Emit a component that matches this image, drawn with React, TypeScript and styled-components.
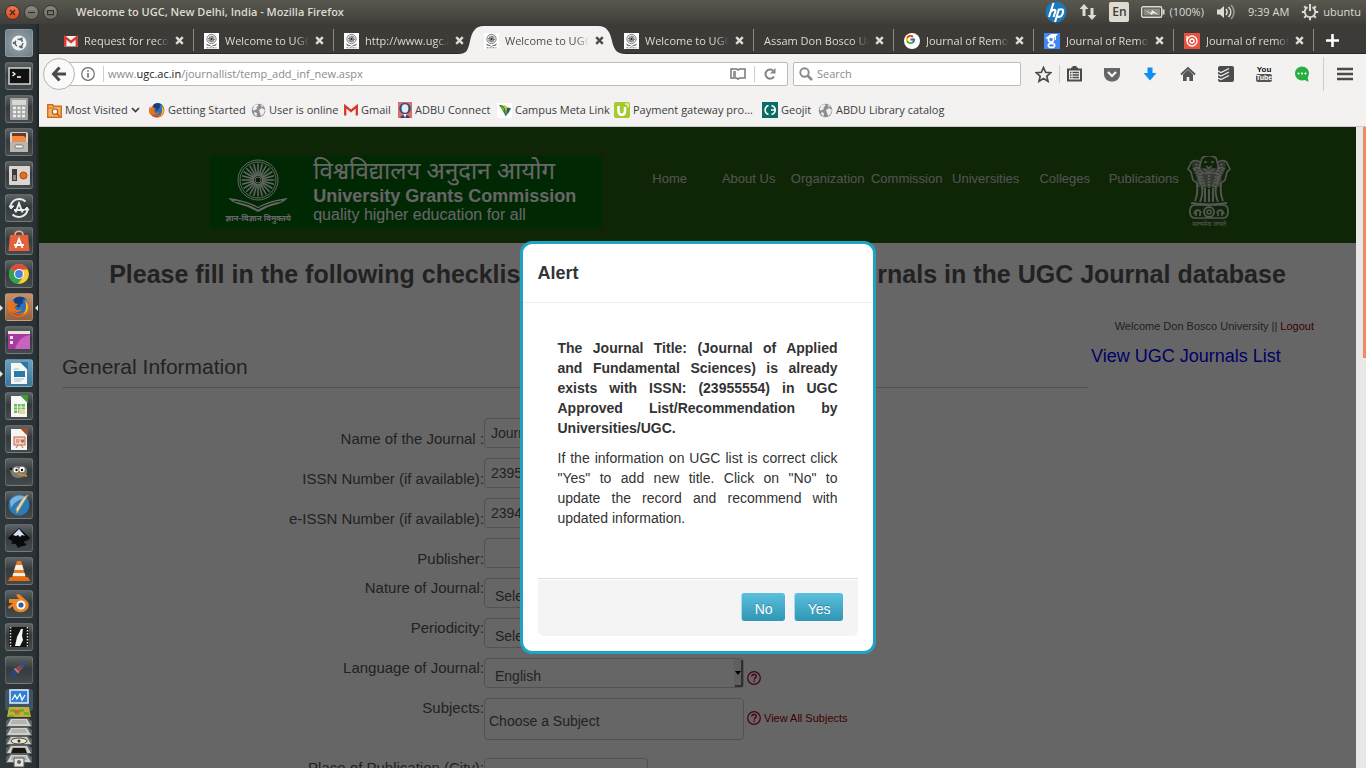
import React from "react";
import styled, { createGlobalStyle, css } from "styled-components";
import { FcGoogle } from "react-icons/fc";

const uiFont = `"Open Sans", "Noto Sans", sans-serif`;
const pageFont = `"Liberation Sans", Arial, "Noto Sans", sans-serif`;

const GlobalStyle = createGlobalStyle`
  *, *::before, *::after { box-sizing: border-box; }
  body { margin: 0; overflow: hidden; font-family: ${pageFont}; }
  button, input, select { font-family: inherit; }
  a { text-decoration: none; color: inherit; }
  svg { display: block; flex: none; }
`;

/* ---------- desktop shell ---------- */

const Desktop = styled.div`
  display: flex;
  flex-direction: column;
  height: 100vh;
  background: #666;
`;

const Panel = styled.header`
  flex: none;
  display: flex;
  align-items: center;
  height: 24px;
  padding: 0 5px;
  background: linear-gradient(#59584f, #3f3e3a);
  color: #dfdbd2;
  font: 11px/24px ${uiFont};
`;

const WindowButtons = styled.div`
  display: flex;
  gap: 4px;
`;

const WindowButton = styled.button<{ $close?: boolean }>`
  display: grid;
  place-items: center;
  width: 15px;
  height: 15px;
  padding: 0;
  border: 1px solid #35342f;
  border-radius: 50%;
  background: ${(p) => (p.$close ? "linear-gradient(#f2784f, #df4a1a)" : "linear-gradient(#8b897f, #6b6a62)")};
`;

const WindowTitle = styled.h1`
  flex: 1;
  margin: 0 0 0 18px;
  font: 600 11px/24px ${uiFont};
  white-space: nowrap;
`;

const Indicators = styled.div`
  display: flex;
  align-items: center;
  gap: 12px;
  white-space: nowrap;
`;

const Indicator = styled.span`
  display: flex;
  align-items: center;
  gap: 4px;
`;

const Keyboard = styled.span`
  width: 20px;
  height: 20px;
  border-radius: 2px;
  background: #dfdbd2;
  color: #3c3b37;
  font: 600 12px/20px ${uiFont};
  text-align: center;
`;

const Workspace = styled.div`
  flex: 1;
  display: flex;
  min-height: 0;
`;

const Launcher = styled.nav`
  flex: none;
  display: flex;
  flex-direction: column;
  align-items: center;
  gap: 5px;
  width: 39px;
  padding: 5px 1px 0 0;
  overflow: hidden;
  background: linear-gradient(90deg, #2e3739, #2b3235 90%, #1d2224);
`;

const Tile = styled.button<{ $tint?: string; $running?: boolean; $focused?: boolean }>`
  position: relative;
  flex: none;
  width: 28px;
  height: 28px;
  padding: 0;
  border: 1px solid rgba(255, 255, 255, 0.16);
  border-radius: 3px;
  background: ${(p) => p.$tint || "linear-gradient(#5d6365, #353b3d 45%, #454b4d)"};

  & > svg { margin: -1px; }

  ${(p) =>
    p.$running &&
    css`
      &::before {
        content: "";
        position: absolute;
        left: -6px;
        top: 11px;
        border: 3px solid transparent;
        border-left: 3px solid #e4e4e4;
        border-right: 0;
      }
    `}
  ${(p) =>
    p.$focused &&
    css`
      &::after {
        content: "";
        position: absolute;
        right: -6px;
        top: 11px;
        border: 3px solid transparent;
        border-right: 3px solid #e4e4e4;
        border-left: 0;
      }
    `}
`;

/* ---------- browser chrome ---------- */

const Browser = styled.div`
  flex: 1;
  display: flex;
  flex-direction: column;
  min-width: 0;
`;

const TabStrip = styled.div`
  flex: none;
  display: flex;
  height: 30px;
  padding-left: 14px;
  background: #3c3b37;
  border-bottom: 1px solid #2a2926;
  font: 11px/30px ${uiFont};
`;

const Tab = styled.div<{ $active?: boolean; $divider?: boolean }>`
  position: relative;
  flex: 0 1 140px;
  display: flex;
  align-items: center;
  gap: 6px;
  min-width: 0;
  height: 30px;
  padding: 3px 9px 0 11px;
  color: ${(p) => (p.$active ? "#4c4c4c" : "#dedbd5")};

  ${(p) =>
    p.$divider &&
    css`
      &::after {
        content: "";
        position: absolute;
        right: -1px;
        top: 5px;
        height: 22px;
        border-right: 1px solid #8a8984;
      }
    `}
`;

const TabShape = styled.svg`
  position: absolute;
  left: -15px;
  top: 2px;
`;

const TabLabel = styled.span`
  position: relative;
  flex: 1;
  overflow: hidden;
  line-height: 20px;
  white-space: nowrap;
  mask-image: linear-gradient(90deg, #000 85%, transparent);
`;

const TabIcon = styled.span`
  position: relative;
`;

const PlainButton = styled.button`
  position: relative;
  display: grid;
  place-items: center;
  flex: none;
  padding: 0;
  border: 0;
  background: none;
  color: inherit;
`;

const NewTab = styled(PlainButton)`
  width: 38px;
  padding-top: 3px;
  color: #fff;
`;

const NavBar = styled.div`
  flex: none;
  display: flex;
  align-items: center;
  height: 40px;
  padding: 0 13px 0 4px;
  background: #f3f2f1;
`;

const BackButton = styled.button`
  position: relative;
  z-index: 1;
  display: grid;
  place-items: center;
  flex: none;
  width: 32px;
  height: 32px;
  margin-right: -15px;
  padding: 0;
  border: 1px solid #b5b3b0;
  border-radius: 50%;
  background: #fafafa;
`;

const UrlBox = styled.div`
  flex: 1;
  display: flex;
  align-items: center;
  gap: 8px;
  min-width: 0;
  height: 24px;
  margin-right: 5px;
  padding: 0 10px 0 20px;
  border: 1px solid #bdbbb8;
  border-radius: 2px;
  background: #fff;
`;

const Divider = styled.span<{ $height: number }>`
  flex: none;
  width: 1px;
  height: ${(p) => p.$height}px;
  background: #cfcdca;
`;

const Address = styled.a`
  flex: 1;
  margin-left: -4px;
  overflow: hidden;
  color: #8b8b8b;
  font: 11px/20px ${uiFont};
  white-space: nowrap;

  b { color: #222; font-weight: normal; }
`;

const SearchBox = styled.label`
  flex: none;
  display: flex;
  align-items: center;
  gap: 4px;
  width: 228px;
  height: 24px;
  padding-left: 5px;
  border: 1px solid #bdbbb8;
  border-radius: 2px;
  background: #fff;

  input {
    flex: 1;
    min-width: 0;
    padding: 0;
    border: 0;
    outline: 0;
    background: none;
    font: 11px/20px ${uiFont};
  }
  input::placeholder { color: #8b8b8b; }
`;

const ToolIcons = styled.div`
  flex: none;
  display: flex;
  align-items: center;
  gap: 22px;
  margin-left: 14px;
  color: #4a4a4a;
`;

const StarGroup = styled.div`
  display: flex;
  align-items: center;
  gap: 7px;
`;

const MenuGroup = styled.div`
  display: flex;
  align-items: center;
  gap: 13px;
  margin-left: -9px;
`;

const YouTubeMark = styled.span`
  display: grid;
  justify-items: center;
  width: 16px;
  font: bold 8px/8px "Liberation Sans", sans-serif;
  color: #111;

  span {
    border-radius: 2px;
    background: #555;
    color: #fff;
    font-size: 7px;
  }
`;

const BookmarkBar = styled.div`
  flex: none;
  display: flex;
  height: 33px;
  padding: 0 8px;
  border-bottom: 1px solid #cfcecd;
  background: #f3f2f1;
  color: #3d3d3d;
  font: 11px/32px ${uiFont};
`;

const Bookmark = styled.a<{ $width: number }>`
  display: flex;
  align-items: center;
  gap: 3px;
  width: ${(p) => p.$width}px;
  white-space: nowrap;
`;

/* ---------- web page ---------- */

const Viewport = styled.div`
  position: relative;
  flex: 1;
  display: flex;
  min-height: 0;
`;

const PageArea = styled.div`
  position: relative;
  flex: 1;
  min-width: 0;
  overflow: hidden;
  background: #fff;
`;

const ScrollTrack = styled.div`
  flex: none;
  display: flex;
  justify-content: flex-end;
  width: 10px;
  background: #e9e8e7;
`;

const ScrollThumb = styled.div`
  width: 3px;
  height: 36%;
  background: #ee8a68;
`;

const SiteHeader = styled.header`
  display: flex;
  height: 116px;
  padding: 29px 0 0 13%;
  background: #275f0f;
`;

const Brand = styled.a`
  flex: none;
  display: flex;
  width: 392px;
  height: 72px;
  background: #006405;
  color: #fff;
`;

const BrandEmblem = styled.div`
  display: flex;
  flex-direction: column;
  align-items: center;
  width: 96px;
  padding-top: 3px;
  font: bold 8px/14px "Noto Sans Devanagari", "Lohit Devanagari", "Noto Sans", sans-serif;
  white-space: nowrap;
`;

const BrandText = styled.div`
  padding-left: 7px;
  white-space: nowrap;
`;

const BrandHindi = styled.div`
  padding-top: 3px;
  font: 24px/28px "Noto Sans Devanagari", "Lohit Devanagari", "Noto Sans", sans-serif;
`;

const BrandName = styled.div`
  font: bold 18px/18px ${pageFont};
`;

const BrandMotto = styled.div`
  font: 16px/20px ${pageFont};
`;

const SiteNav = styled.nav`
  flex: none;
  display: grid;
  grid-template-columns: repeat(7, 79px);
  margin-left: 28px;
  color: #d0d0d0;
  font-size: 13px;
  line-height: 46px;
  text-align: center;
`;

const StateEmblem = styled.div`
  width: 52px;
  color: #d8d8d8;
  font: 7px/12px "Noto Sans Devanagari", "Noto Sans", sans-serif;
  text-align: center;
  white-space: nowrap;

  svg { margin: 0 auto; }
`;

const PageTitle = styled.h2`
  margin: 0;
  padding: 11px 0 0;
  color: #555;
  font-size: 25px;
  line-height: 40px;
  text-align: center;
  white-space: nowrap;
`;

const Columns = styled.div`
  display: flex;
  gap: 3px;
  padding: 22px 42px 0 23px;
`;

const FormColumn = styled.form`
  flex: 1;
  padding-top: 31px;
`;

const Legend = styled.h3`
  margin: 0 0 30px;
  border-bottom: 1px solid #d0d0d0;
  color: #555;
  font-size: 21px;
  font-weight: normal;
  line-height: 40px;
`;

const SideColumn = styled.aside`
  width: 223px;
`;

const Greeting = styled.p`
  margin: 0;
  color: #555;
  font-size: 11px;
  line-height: 20px;
  text-align: right;

  a { color: #a00000; }
`;

const ListLink = styled.a`
  display: block;
  color: #00f;
  font-size: 18px;
  line-height: 40px;
`;

const Row = styled.div<{ $tall?: boolean }>`
  display: grid;
  grid-template-columns: minmax(0, 422px) auto 1fr;
  align-items: start;
  height: ${(p) => (p.$tall ? 50 : 30)}px;
  margin-bottom: 10px;
`;

const Label = styled.label<{ $low?: boolean }>`
  padding-top: ${(p) => (p.$low ? 11 : 0)}px;
  color: #555;
  font-size: 15px;
  line-height: 20px;
  text-align: right;
`;

const fieldBox = css`
  border: 1px solid #ccc;
  border-radius: 4px;
  outline: 0;
  background: #fff;
  color: #555;
  font-size: 14px;
`;

const TextField = styled.input<{ $width?: number; $tall?: boolean }>`
  ${fieldBox}
  width: ${(p) => p.$width || 260}px;
  height: ${(p) => (p.$tall ? 42 : 30)}px;
  padding: ${(p) => (p.$tall ? "6px 4px 2px" : "4px 6px")};

  &::placeholder { color: #555; }
`;

const SelectShell = styled.div`
  position: relative;
  width: 260px;
`;

const Select = styled.select`
  ${fieldBox}
  appearance: none;
  display: block;
  width: 100%;
  height: 30px;
  padding: 6px 10px 0;
`;

const SelectArrow = styled.svg`
  position: absolute;
  right: 1px;
  top: 1px;
`;

const Help = styled.div`
  display: flex;
  align-items: center;
  gap: 3px;
  height: 40px;
  padding-left: 3px;
  color: #b0002a;
  font-size: 11px;

  a { color: #a00000; }
`;

/* ---------- dialog ---------- */

const Backdrop = styled.div`
  position: absolute;
  inset: 0;
  display: flex;
  justify-content: center;
  align-items: flex-start;
  padding-top: 114px;
  background: rgba(0, 0, 0, 0.6);
`;

const Dialog = styled.section`
  width: 356px;
  border: 3px solid #1fa3c4;
  border-radius: 12px;
  background: #fff;
  color: #333;
`;

const DialogTitle = styled.h3`
  margin: 0;
  padding: 9px 15px;
  border-bottom: 1px solid #eee;
  font-size: 18px;
  line-height: 40px;
`;

const DialogBody = styled.div`
  padding: 35px 35px 40px;
  font-size: 14px;
  line-height: 20px;
  text-align: justify;

  p { margin: 0 0 10px; }
`;

const DialogFooter = styled.footer`
  display: flex;
  justify-content: flex-end;
  gap: 9px;
  margin: 0 15px 15px;
  padding: 14px 15px 15px;
  border-top: 1px solid #ddd;
  border-radius: 0 0 6px 6px;
  background: #f4f4f4;
  box-shadow: inset 0 1px 0 #fff;
`;

const DialogButton = styled.button`
  height: 28px;
  padding: 4px 12px 0 13px;
  border: 0;
  border-left: 1px solid #a5dbea;
  border-radius: 3px;
  background: linear-gradient(#5bc0de, #2f96b4);
  color: #fff;
  font-size: 14px;
  line-height: 20px;
  text-shadow: 0 -1px 0 rgba(0, 0, 0, 0.25);
`;

/* ---------- drawings ---------- */

const spokes = (n: number) => Array.from({ length: n }, (_, i) => (i * 360) / n);

const UgcFavicon = () => (
  <svg width="15" height="16" viewBox="0 0 15 16">
    <rect width="15" height="16" fill="#fff" />
    <circle cx="7.5" cy="6" r="4.6" fill="none" stroke="#777" strokeWidth="1" />
    <circle cx="7.5" cy="6" r="2.6" fill="#aaa" stroke="#555" strokeWidth="1.4" strokeDasharray="1 .6" />
    <circle cx="7.5" cy="6" r="1" fill="#222" />
    <path d="M2 10.5 7.5 13l5.500-2.500-1 2-4.500 1-4.500-1z" fill="#666" />
    <path d="M2.500 14.800h10" stroke="#777" strokeWidth="1" strokeDasharray="2 1" />
  </svg>
);

const GmailIcon = () => (
  <svg width="14" height="14" viewBox="0 0 14 14">
    <path d="M0 2h14v10.500H0z" fill="#f4f0ee" />
    <path d="M1.200 12.500V3.200L7 8l5.800-4.800v9.300" fill="none" stroke="#d4392c" strokeWidth="2.300" />
  </svg>
);

const ScholarIcon = () => (
  <svg width="16" height="16" viewBox="0 0 16 16">
    <rect width="16" height="16" fill="#4285f4" />
    <path d="M1 5.500 7 1h7l-2 2v4h-1V4L9.500 5.500H1z" fill="#fff" />
    <circle cx="7" cy="6.500" r="2.600" fill="#4285f4" stroke="#fff" strokeWidth="1.700" />
    <ellipse cx="7.500" cy="12.400" rx="3.200" ry="2" fill="none" stroke="#fff" strokeWidth="1.600" />
    <path d="M9 8.500 7.500 10.500" stroke="#fff" strokeWidth="1.600" />
  </svg>
);

const TargetIcon = () => (
  <svg width="16" height="16" viewBox="0 0 16 16">
    <rect width="16" height="16" fill="#e8503f" />
    <circle cx="8" cy="8" r="5" fill="none" stroke="#fff" strokeWidth="1.300" />
    <circle cx="8" cy="8" r="2" fill="none" stroke="#fff" strokeWidth="1.500" />
    <path d="M3 3v5" stroke="#fff" strokeWidth="1.300" />
  </svg>
);

const GoogleIcon = () => (
  <svg width="16" height="16" viewBox="0 0 16 16">
    <circle cx="8" cy="8" r="8" fill="#fff" />
    <FcGoogle x="1" y="1" width="14" height="14" />
  </svg>
);

const CloseIcon = () => (
  <svg width="9" height="9" viewBox="0 0 9 9">
    <path d="m1.200 1.200 6.600 6.600m0-6.600L1.200 7.800" stroke="currentColor" strokeWidth="2.400" />
  </svg>
);

const FirefoxArt = ({ size }: { size: number }) => (
  <svg width={size} height={size} viewBox={size < 20 ? "3 2 22 22" : "0 0 28 28"}>
    <circle cx="15" cy="12.500" r="9" fill="#2f6fb5" />
    <path d="M9 6c3-3 9-3 12 0-3-.5-4 1-3 3s-3 1-3 4-5 0-6-3z" fill="#173f7e" />
    <path d="M5 6c-1 3 0 4 0 5 1-2 2-3 4-3 0 2 1 3 4 3-1 2-4 2-3 4 1 3 5 2 7 1-2 4-8 4-9 0 2 7 13 6 14-2 .6-4-1-7-2-8 5 4 5 10 2 14-4 5-12 5-16 0C2 18 2 11 5 6z" fill="#e8731d" />
    <path d="M20 7c4 4 4 11-1 14 2-4 3-8 1-14z" fill="#fdc62f" />
    <path d="M5.500 18c3 5 9 6 13 3-5 1-9 0-13-3z" fill="#c43d17" />
  </svg>
);

const GlobeIcon = () => (
  <svg width="15" height="15" viewBox="0 0 15 15">
    <circle cx="7.500" cy="7.500" r="6.800" fill="#8d8d8d" />
    <path d="M3 2.500 6.500 1l1 2-2 1 .5 2-3 1.500L1.500 7zM8 7l3-2 3 2-1.500 4-2.500 2-1-3zM3.500 9 6 10l-.500 3.500L3 11z" fill="#efefef" />
    <path d="m9.500 1.500 3 2-2 .5z" fill="#efefef" />
  </svg>
);

const FolderIcon = () => (
  <svg width="15" height="15" viewBox="0 0 15 15">
    <path d="M.7 14.300V1.700h5l1 1.500h7.600v11.100z" fill="#f4b267" stroke="#cf6f1c" strokeWidth="1.400" />
    <path d="M1 5h6" stroke="#cf6f1c" />
    <circle cx="8" cy="8.700" r="2.700" fill="#fff" stroke="#b85c10" strokeWidth="1.200" />
    <path d="m10 10.700 2.500 2.300" stroke="#b85c10" strokeWidth="1.400" />
  </svg>
);

const PersonIcon = () => (
  <svg width="14" height="16" viewBox="0 0 14 16">
    <rect width="14" height="16" fill="#d9706f" />
    <circle cx="7" cy="6.500" r="5.800" fill="#31507a" />
    <ellipse cx="7" cy="6.500" rx="3.400" ry="4.200" fill="#e3eaf2" />
    <path d="M2 16c1-4 9-4 10 0z" fill="#3c3f63" />
    <path d="M5.500 12h3l-1.500 4z" fill="#fff" />
  </svg>
);

const ParrotIcon = () => (
  <svg width="15" height="15" viewBox="0 0 15 15">
    <rect width="15" height="15" fill="#fff" />
    <path d="M2 2c3 0 6 1 7 5v7C7 10 5 6 2 2z" fill="#1d8a46" />
    <path d="M6 2c3 0 5 2 5 5l-2 6C9 8 8 5 6 2z" fill="#f0b51f" />
    <path d="M10 4.500 14 5l-2 4-3 4z" fill="#14666e" />
    <path d="M3 3.500 7 5v3z" fill="#7bbf3c" />
  </svg>
);

const UpworkIcon = () => (
  <svg width="16" height="16" viewBox="0 0 16 16">
    <rect width="16" height="16" rx="2" fill="#a5c92f" />
    <path d="M4.500 4v5c0 5 6.500 5 6.500 0V5" fill="none" stroke="#fff" strokeWidth="2.500" />
    <path d="M11 2h3v3" fill="none" stroke="#fff" strokeWidth="1.200" />
  </svg>
);

const GeojitIcon = () => (
  <svg width="16" height="16" viewBox="0 0 16 16">
    <rect width="16" height="16" fill="#0b6b66" />
    <path d="M6.500 3.500C2 5 2 11 6.500 12.500M9.500 3.500C14.500 5 14.500 11 9.500 12.500M9 8h4" fill="none" stroke="#fff" strokeWidth="1.600" />
  </svg>
);

const UgcEmblem = () => (
  <svg width="62" height="53" viewBox="0 0 62 53" stroke="#fff" fill="none">
    <circle cx="31" cy="21" r="20" strokeWidth="1" />
    <circle cx="31" cy="21" r="18" strokeWidth="1" />
    {spokes(24).map((a) => (
      <path key={a} d="M31 17V4.500" strokeWidth="1.500" transform={`rotate(${a} 31 21)`} />
    ))}
    <circle cx="31" cy="21" r="3" fill="#0a4a0a" strokeWidth="1" />
    <path d="M1 39c10 1 22 4 30 9 8-5 20-8 30-9-6 6-14 7-20 9l-10 5-10-5C15 46 7 45 1 39z" fill="#fff" stroke="none" />
    <path d="M7 42c9 1 17 4 24 8 7-4 15-7 24-8" stroke="#006405" strokeWidth="1.200" />
  </svg>
);

const LionCapital = () => (
  <svg width="44" height="63" viewBox="0 0 44 63" fill="none" stroke="#d8d8d8">
    <path d="M15 12C9 16 8 24 11 31h22c3-7 2-15-4-19z" fill="#8a9a80" stroke="none" />
    <path d="M5 9c0-5 6-6 9-2l1 9-4 5c-3-2-5-5-6-12zM39 9c0-5-6-6-9-2l-1 9 4 5c3-2 5-5 6-12z" fill="#6f8463" stroke="none" />
    <path d="M15 2c4-3 10-3 14 0l2 7c2 3-1 6-2 8H15c-1-2-4-5-2-8z" strokeWidth="1.600" />
    <path d="M13 6C8 3 4 5 3 9l-2 4 3 3 2 8 5 4M31 6c5-3 9-1 10 3l2 4-3 3-2 8-5 4" strokeWidth="1.600" />
    <path d="M17 6h3m4 0h3M19 10l3 2 3-2M17 13c3 3 7 3 10 0" strokeWidth="1.500" />
    <path d="M8 13c3 8 6 14 8 20M36 13c-3 8-6 14-8 20M14 17c1 6 3 10 4 15M30 17c-1 6-3 10-4 15M22 16v16M11 11c1 8 2 12 3 18M33 11c-1 8-2 12-3 18" strokeWidth="2.400" strokeDasharray="2 1" />
    <path d="M6 13l4-2M34 11l4 2M8 8l3 1M33 9l3-1" strokeWidth="1.500" />
    <path d="M10 28c1 7 0 12-2 17M15 31c1 5 0 10-2 15M18 32v14M22 33v13M26 32v14M29 31c-1 5 0 10 2 15M34 28c-1 7 0 12 2 17" strokeWidth="1.900" />
    <path d="M4 47c10 2 26 2 36 0" strokeWidth="2" />
    <rect x="3" y="49" width="38" height="13" rx="5" strokeWidth="1.700" />
    <circle cx="22" cy="56" r="5" strokeWidth="1.800" />
    <circle cx="22" cy="56" r="2" strokeWidth="1.500" />
    <path d="M7 58c2-6 6-4 7-1m-5-1v4m4-3v3M37 58c-2-6-6-4-7-1m5-1v4m-4-3v3" strokeWidth="1.700" />
  </svg>
);

const HelpIcon = () => (
  <svg width="14" height="14" viewBox="0 0 14 14" fill="none" stroke="currentColor">
    <circle cx="7" cy="7" r="6.300" strokeWidth="1.200" />
    <path d="M4.800 5.500c0-3 4.500-2.600 4.500-.2 0 1.500-2.100 1.600-2.100 3.200M7.200 9.600v1.400" strokeWidth="1.500" />
  </svg>
);

const DocArt = ({ color, children }: { color: string; children: React.ReactNode }) => (
  <svg width="28" height="28" viewBox="0 0 28 28">
    <path d="M6 4h10l6 6v15H6z" fill="#f6f6f4" />
    <path d="M15 3h8v8z" fill={color} />
    {children}
  </svg>
);

const tiles: { name: string; tint?: string; running?: boolean; focused?: boolean; art: React.ReactNode }[] = [
  {
    name: "Dash",
    tint: "radial-gradient(#9aa7ad, #6f7e86)",
    art: (
      <svg width="28" height="28" viewBox="0 0 28 28">
        <circle cx="14" cy="14" r="7.500" fill="#f3f3f3" />
        <circle cx="14" cy="14" r="3.800" fill="none" stroke="#5b6a72" strokeWidth="1.500" strokeDasharray="6 2" />
        <circle cx="9" cy="14" r="1.300" fill="#5b6a72" />
        <circle cx="16.500" cy="9.800" r="1.300" fill="#5b6a72" />
        <circle cx="16.500" cy="18.200" r="1.300" fill="#5b6a72" />
      </svg>
    ),
  },
  {
    name: "Terminal",
    art: (
      <svg width="28" height="28" viewBox="0 0 28 28">
        <rect x="4" y="6" width="21" height="16" fill="#111" stroke="#d5d5d5" strokeWidth="1.500" />
        <path d="m7.500 10 2.500 2-2.500 2M12 15h4" fill="none" stroke="#fff" strokeWidth="1.300" />
      </svg>
    ),
  },
  {
    name: "Calculator",
    art: (
      <svg width="28" height="28" viewBox="0 0 28 28">
        <rect x="5" y="3" width="18" height="22" rx="1" fill="#a3a3a3" />
        <rect x="7" y="5" width="14" height="5" fill="#d5d8d3" />
        <path d="M8 13h3M12.500 13h3M17 13h3M8 17h3M12.500 17h3M17 17h3M8 21h3M12.500 21h3M17 21h3" stroke="#eee" strokeWidth="2.500" />
      </svg>
    ),
  },
  {
    name: "Files",
    art: (
      <svg width="28" height="28" viewBox="0 0 28 28">
        <rect x="5" y="4" width="18" height="20" rx="2" fill="#d7d4ce" />
        <rect x="7" y="5" width="14" height="8" fill="#6b3a20" />
        <path d="M7 8h12l2 2v4H7z" fill="#ee8b4a" />
        <path d="M5 14h18v10H5z" fill="#b9b6b0" />
        <rect x="10" y="17" width="8" height="3" rx="1" fill="#fff" stroke="#777" />
      </svg>
    ),
  },
  {
    name: "Settings",
    art: (
      <svg width="28" height="28" viewBox="0 0 28 28">
        <rect x="4" y="5" width="21" height="19" rx="1" fill="#ddd3d0" />
        <rect x="7" y="8" width="5" height="12" fill="#3c3c3c" />
        <rect x="8" y="14" width="3" height="5" fill="#888" />
        <circle cx="18.500" cy="14.500" r="3.500" fill="#e8701a" stroke="#a04a10" />
      </svg>
    ),
  },
  {
    name: "Software Updater",
    art: (
      <svg width="28" height="28" viewBox="0 0 28 28" fill="none" stroke="#ececec">
        <path d="M5.500 12a9 9 0 0 1 15-4.500M22.500 16a9 9 0 0 1-15 4.500" strokeWidth="2" />
        <path d="m4 12 2 3 3-3zM24 16l-2-3-3 3z" fill="#ececec" strokeWidth="1" />
        <path d="m10.500 18.500 3.500-9 3.500 9M9 16h10" strokeWidth="2" />
      </svg>
    ),
  },
  {
    name: "Software Center",
    art: (
      <svg width="28" height="28" viewBox="0 0 28 28">
        <path d="M5 8h18l1.500 16h-21z" fill="#e6603a" />
        <path d="M10 8c0-5 8-5 8 0" fill="none" stroke="#f6a98f" strokeWidth="1.500" />
        <path d="m10.500 21 3.500-9 3.500 9M9 18h10" fill="none" stroke="#fff" strokeWidth="1.800" />
      </svg>
    ),
  },
  {
    name: "Chrome",
    art: (
      <svg width="28" height="28" viewBox="0 0 28 28">
        <circle cx="14" cy="14" r="10" fill="#f7cd2f" />
        <path d="M14 14 5.300 9A10 10 0 0 1 23 9.500h-9z" fill="#dd4b3e" />
        <path d="M14 14 5.300 9A10 10 0 0 0 13 24l5-7.500z" fill="#2fa350" />
        <circle cx="14" cy="14" r="5" fill="#fff" />
        <circle cx="14" cy="14" r="3.900" fill="#4a80dc" />
      </svg>
    ),
  },
  { name: "Firefox", tint: "linear-gradient(#c3916d, #94623f)", running: true, focused: true, art: <FirefoxArt size={28} /> },
  {
    name: "Screenshots",
    art: (
      <svg width="28" height="28" viewBox="0 0 28 28">
        <rect x="3" y="6" width="22" height="17" fill="#a93aa0" />
        <path d="M10 23c3-9 8-13 15-14v14z" fill="#c963c0" />
        <rect x="3" y="5" width="22" height="3" fill="#e9e4dc" />
        <path d="M5 10h3v3H5zM5 15h3v3H5z" fill="#eee" />
      </svg>
    ),
  },
  {
    name: "Writer",
    tint: "linear-gradient(#6aa0bd, #3c7699)",
    running: true,
    art: (
      <DocArt color="#2b77a8">
        <path d="M9 10h5M9 20h10M9 22h7" stroke="#9dc2d8" />
        <rect x="9" y="12" width="11" height="6" fill="#2a7ca6" />
      </DocArt>
    ),
  },
  {
    name: "Calc",
    art: (
      <DocArt color="#3c9e2f">
        <rect x="9" y="12" width="11" height="9" fill="#6dbb5a" />
        <path d="M9 15h11M9 18h11M12.500 12v9M16 12v9" stroke="#fff" strokeWidth=".8" />
        <rect x="14" y="17" width="6" height="5" fill="#e6d9a0" />
      </DocArt>
    ),
  },
  {
    name: "Impress",
    art: (
      <DocArt color="#a34b2c">
        <rect x="9" y="12" width="11" height="8" fill="#f2d5c8" stroke="#c0694a" />
        <path d="M11 15h4M11 17h3M13 20l-2 3M16 20l2 3" stroke="#c0694a" />
        <circle cx="17.500" cy="16" r="1.800" fill="#c0694a" />
      </DocArt>
    ),
  },
  {
    name: "GIMP",
    art: (
      <svg width="28" height="28" viewBox="0 0 28 28">
        <path d="M5 10c3 1 4-2 7-2s9-1 10 4-4 8-9 8-8-4-8-10z" fill="#7e7b6d" />
        <circle cx="11" cy="12" r="2.500" fill="#fff" />
        <circle cx="17" cy="11.500" r="2.700" fill="#fff" />
        <circle cx="11.500" cy="12" r="1.200" fill="#111" />
        <circle cx="17" cy="12" r="1.200" fill="#111" />
        <path d="m13 16 9 2" stroke="#c8873a" strokeWidth="2" />
        <circle cx="6" cy="11" r="1.300" fill="#151515" />
      </svg>
    ),
  },
  {
    name: "Scribus",
    art: (
      <svg width="28" height="28" viewBox="0 0 28 28">
        <circle cx="14" cy="14" r="10.500" fill="#2c7bb5" />
        <path d="M5 10c4-6 12-7 16-3-6 1-12 4-15 10z" fill="#77b3dc" />
        <path d="M23 4 12 22l-1-4 8-12z" fill="#e4dfcf" stroke="#b89b5a" />
      </svg>
    ),
  },
  {
    name: "Inkscape",
    art: (
      <svg width="28" height="28" viewBox="0 0 28 28">
        <path d="M14 4 25 14c-1 3-5 2-6 4s4 1 2 3-6 0-7 3c-3-1-1-3-4-4s-5 0-3-2-3-1-4-4z" fill="#0b0b0d" />
        <path d="M14 5 8 11l3 1 2-1 2 2 2-2 3 1z" fill="#d3e0f2" />
      </svg>
    ),
  },
  {
    name: "VLC",
    art: (
      <svg width="28" height="28" viewBox="0 0 28 28">
        <path d="M12 4h4l5 17H7z" fill="#ef7a1c" />
        <path d="m10.800 8-1.500 5h9.400l-1.500-5zM8.400 16l-.800 3h12.800l-.800-3z" fill="#f3efe9" />
        <path d="M5 20h18l2 4H3z" fill="#e86c12" />
      </svg>
    ),
  },
  {
    name: "Blender",
    art: (
      <svg width="28" height="28" viewBox="0 0 28 28">
        <path d="M4 9h10l-3-4 3-1 9 8c3 7-4 11-9 10-4-.5-6-3-6-6l-4 3-1-2 5-4H4z" fill="#ee8722" />
        <circle cx="16" cy="15" r="4.500" fill="#fff" />
        <circle cx="16" cy="15" r="2.600" fill="#2a5fa3" />
      </svg>
    ),
  },
  {
    name: "Video Editor",
    art: (
      <svg width="28" height="28" viewBox="0 0 28 28">
        <rect x="4" y="4" width="20" height="20" fill="#141414" />
        <path d="M5.500 4v20M22.500 4v20" stroke="#ddd" strokeWidth="1.500" strokeDasharray="1.500 1.500" />
        <path d="m10 23 2-9 4-8h2l-1 7 1 4-3 6z" fill="#f2f2f2" />
      </svg>
    ),
  },
  {
    name: "Brushes",
    art: (
      <svg width="28" height="28" viewBox="0 0 28 28">
        <path d="m5 17 4-4 4 4-6 7z" fill="#2c476e" />
        <path d="m10 12 5-3 3 3-5 6z" fill="#8d4547" />
        <path d="m14 9 5-4 2 2-3 6z" fill="#37507c" />
        <path d="m9 13 1-1 4 4-1 1z" fill="#9aa0ad" />
      </svg>
    ),
  },
];

const StackedTiles = () => (
  <svg width="28" height="80" viewBox="0 0 28 80">
    <rect width="28" height="22" rx="3" fill="#3d5468" />
    <rect x="5" y="1" width="18" height="13" fill="#2f7fd6" stroke="#e6eef6" strokeWidth="1.500" />
    <path d="m7 11 3-5 2 4 3-5 2 6 3-5" fill="none" stroke="#fff" strokeWidth="1.300" />
    <path d="M4 18h20l2 10H2z" fill="#c7ad2f" />
    <path d="M5 20h5v3H5zM14 20h5v3h-5zM10 23h4v3h-4zM19 23h5v3h-5zM4 26h5v2H4z" fill="#6cae3c" />
    <path d="M9 21h6v3H9z" fill="#cf6a2c" />
    {[29, 38, 47, 56, 65].map((y) => (
      <g key={y}>
        <path d={`M1 ${y + 9}V${y + 3}l4-3h18l4 3v6z`} fill="#596163" />
        <path d={`M2 ${y + 8}l4-7h16l4 7z`} fill="#cfcfcb" />
        <path d={`M7 ${y + 3}h14M6 ${y + 5}h16`} stroke="#8c8c86" strokeWidth=".8" />
      </g>
    ))}
    <ellipse cx="14" cy="52" rx="8" ry="3" fill="#e8e5c8" stroke="#444" />
    <circle cx="14" cy="52" r="1.500" fill="#333" />
    <path d="M6 64h16l-2-5H8z" fill="#1b1611" />
    <path d="M9 69h10v9H9z" fill="#e4e2da" stroke="#555" />
    <circle cx="14" cy="73" r="2" fill="#5d6062" />
  </svg>
);

const tabs: { title: string; icon?: React.ReactNode; active?: boolean; divider?: boolean }[] = [
  { title: "Request for recommendation", icon: <GmailIcon />, divider: true },
  { title: "Welcome to UGC, New Delhi", icon: <UgcFavicon />, divider: true },
  { title: "http://www.ugc.ac.in/journallist", icon: <UgcFavicon /> },
  { title: "Welcome to UGC, New Delhi", icon: <UgcFavicon />, active: true },
  { title: "Welcome to UGC, New Delhi", icon: <UgcFavicon />, divider: true },
  { title: "Assam Don Bosco University", divider: true },
  { title: "Journal of Remote Sensing", icon: <GoogleIcon />, divider: true },
  { title: "Journal of Remote Sensing", icon: <ScholarIcon />, divider: true },
  { title: "Journal of remote sensing", icon: <TargetIcon />, divider: true },
];

const bookmarks: { title: string; icon: React.ReactNode; width: number; menu?: boolean }[] = [
  { title: "Most Visited", icon: <FolderIcon />, width: 102, menu: true },
  { title: "Getting Started", icon: <FirefoxArt size={16} />, width: 102 },
  { title: "User is online", icon: <GlobeIcon />, width: 93 },
  { title: "Gmail", icon: <GmailIcon />, width: 54 },
  { title: "ADBU Connect", icon: <PersonIcon />, width: 99 },
  { title: "Campus Meta Link", icon: <ParrotIcon />, width: 117 },
  { title: "Payment gateway pro…", icon: <UpworkIcon />, width: 148 },
  { title: "Geojit", icon: <GeojitIcon />, width: 56 },
  { title: "ABDU Library catalog", icon: <GlobeIcon />, width: 126 },
];

const TopPanel = () => (
  <Panel>
    <WindowButtons>
      <WindowButton $close aria-label="Close">
        <svg width="7" height="7" viewBox="0 0 7 7"><path d="m1 1 5 5m0-5L1 6" stroke="#3c2a20" strokeWidth="1.300" /></svg>
      </WindowButton>
      <WindowButton aria-label="Minimise">
        <svg width="7" height="7" viewBox="0 0 7 7"><path d="M0 3.500h7" stroke="#33322d" strokeWidth="1.300" /></svg>
      </WindowButton>
      <WindowButton aria-label="Maximise">
        <svg width="7" height="7" viewBox="0 0 7 7"><path d="M.6 1.600h5.800v4H.6z" fill="none" stroke="#33322d" strokeWidth="1.200" /></svg>
      </WindowButton>
    </WindowButtons>
    <WindowTitle>Welcome to UGC, New Delhi, India - Mozilla Firefox</WindowTitle>
    <Indicators>
      <svg width="22" height="22" viewBox="0 0 22 22">
        <circle cx="11" cy="11" r="10.500" fill="#1b79ba" />
        <path d="m8.500 2-4.500 14M6 10.500c4-3.500 5-1 4 1L8.500 16M14 8l-4 13M13 9c5-2 6 0 4.500 4s-4 3-5.500 2.500" fill="none" stroke="#fff" strokeWidth="2.100" />
      </svg>
      <svg width="18" height="18" viewBox="0 0 18 18" fill="#dfdbd2">
        <path d="M5 1 9.500 6H6.500v7h-3V6H.5zM13 17 8.500 12h3V5h3v7h3z" />
      </svg>
      <Keyboard>En</Keyboard>
      <Indicator>
        <svg width="24" height="14" viewBox="0 0 24 14">
          <rect x=".7" y="1.700" width="20" height="10.600" rx="1.500" fill="none" stroke="#dfdbd2" strokeWidth="1.400" />
          <rect x="2.500" y="3.500" width="16.500" height="7" fill="#8d8a82" />
          <path d="M21.500 4.500h2v5h-2z" fill="#dfdbd2" />
          <path d="m4 5 6 3 1-3 7 5-6-2-1 2z" fill="#f2f0ea" />
        </svg>
        (100%)
      </Indicator>
      <svg width="20" height="16" viewBox="0 0 20 16" fill="none" stroke="#dfdbd2">
        <path d="M1 5.500h3L8 2v12l-4-3.500H1z" fill="#dfdbd2" stroke="none" />
        <path d="M10 5c1.500 2 1.500 4 0 6M12.500 3c3 3 3 7 0 10" strokeWidth="1.600" />
        <path d="M15 1c4 4 4 10 0 14" strokeWidth="1.600" opacity=".5" />
      </svg>
      <Indicator>9:39 AM</Indicator>
      <Indicator>
        <svg width="18" height="18" viewBox="0 0 18 18" fill="none" stroke="#dfdbd2">
          <path d="M6.500 4.200a5.300 5.300 0 1 0 5 0" strokeWidth="1.900" />
          <path d="M9 1v7" strokeWidth="2" />
          {[45, 90, 135, 180, 225, 270, 315].map((a) => (
            <path key={a} d="M9 .800v2.700" strokeWidth="2" transform={`rotate(${a} 9 9)`} />
          ))}
        </svg>
        ubuntu
      </Indicator>
    </Indicators>
  </Panel>
);

const Tabs = () => (
  <TabStrip>
    {tabs.map((t, i) => (
      <Tab key={i} $active={t.active} $divider={t.divider}>
        {t.active && (
          <TabShape width="168" height="28" viewBox="0 0 168 28">
            <path d="M0 28c9 0 10-4 12-13S17 0 26 0h114c9 0 12 6 14 15s5 13 14 13z" fill="#f3f2f1" />
          </TabShape>
        )}
        {t.icon && <TabIcon>{t.icon}</TabIcon>}
        <TabLabel>{t.title}</TabLabel>
        <PlainButton aria-label="Close tab"><CloseIcon /></PlainButton>
      </Tab>
    ))}
    <NewTab aria-label="New tab">
      <svg width="13" height="13" viewBox="0 0 13 13"><path d="M6.500 0v13M0 6.500h13" stroke="currentColor" strokeWidth="2.600" /></svg>
    </NewTab>
  </TabStrip>
);

const Navigation = () => (
  <NavBar>
    <BackButton aria-label="Back">
      <svg width="16" height="16" viewBox="0 0 16 16">
        <path d="M8.500 1.500 2.500 8l6 6.500M3 8h12" fill="none" stroke="#4a4a4a" strokeWidth="3" />
      </svg>
    </BackButton>
    <UrlBox>
      <PlainButton aria-label="Site information">
        <svg width="14" height="14" viewBox="0 0 14 14" fill="none" stroke="#6a6a6a">
          <circle cx="7" cy="7" r="6.300" strokeWidth="1.200" />
          <path d="M7 6v4.500M7 3.200v1.600" strokeWidth="1.600" />
        </svg>
      </PlainButton>
      <Divider $height={16} />
      <Address href="#">www.<b>ugc.ac.in</b>/journallist/temp_add_inf_new.aspx</Address>
      <PlainButton aria-label="Reader view">
        <svg width="16" height="12" viewBox="0 0 16 12" fill="none" stroke="#777" strokeWidth="1.500">
          <path d="M1 1h5.500L8 2l1.500-1H15v9H9.500L8 11.200 6.500 10H1zM3 4h3M3 6h3M3 8h3" />
        </svg>
      </PlainButton>
      <Divider $height={16} />
      <PlainButton aria-label="Reload">
        <svg width="14" height="14" viewBox="0 0 14 14">
          <path d="M11 9.500A4.600 4.600 0 1 1 10 3.500" fill="none" stroke="#7f868c" strokeWidth="2" />
          <path d="M12.500 1v5.500H7z" fill="#7f868c" />
        </svg>
      </PlainButton>
    </UrlBox>
    <SearchBox>
      <svg width="14" height="14" viewBox="0 0 14 14" fill="none" stroke="#8a8a8a">
        <circle cx="5.500" cy="5.500" r="4.200" strokeWidth="1.900" />
        <path d="m8.500 8.500 4.500 4.500" strokeWidth="2.500" />
      </svg>
      <input type="text" placeholder="Search" aria-label="Search" />
    </SearchBox>
    <ToolIcons>
      <StarGroup>
        <PlainButton aria-label="Bookmark this page">
          <svg width="17" height="17" viewBox="0 0 17 17">
            <path d="m8.500 1.500 2.100 4.800 5.100.5-3.900 3.400 1.200 5.100-4.500-2.700L4 15.300l1.200-5.100L1.300 6.800l5.100-.5z" fill="none" stroke="currentColor" strokeWidth="1.700" />
          </svg>
        </PlainButton>
        <Divider $height={18} />
        <PlainButton aria-label="Bookmarks">
          <svg width="15" height="16" viewBox="0 0 15 16">
            <path d="M1 3.500h13v11H1z" fill="none" stroke="currentColor" strokeWidth="2" />
            <path d="M4 2.500h7M5.500 1h4" stroke="currentColor" strokeWidth="2" />
            <path d="M3 6.500h1.500m1 0H12M3 9h1.500m1 0H12M3 11.500h1.500m1 0H12" stroke="currentColor" strokeWidth="1.300" />
          </svg>
        </PlainButton>
      </StarGroup>
      <PlainButton aria-label="Pocket">
        <svg width="16" height="15" viewBox="0 0 16 15">
          <path d="M0 1h16v6c0 10-16 10-16 0z" fill="#666" />
          <path d="m4 5 4 4 4-4" fill="none" stroke="#fff" strokeWidth="2" />
        </svg>
      </PlainButton>
      <PlainButton aria-label="Downloads">
        <svg width="16" height="16" viewBox="0 0 16 16">
          <path d="M5.500 1.500h5V7h4L8 14.500 1.500 7h4z" fill="#148cf5" />
        </svg>
      </PlainButton>
      <PlainButton aria-label="Home">
        <svg width="16" height="16" viewBox="0 0 16 16">
          <path d="M8 3.800 3 8.500V15h3.700v-4h2.600v4H13V8.500z" fill="#555" />
          <path d="M1 8.500 8 2l7 6.500" fill="none" stroke="#555" strokeWidth="1.800" />
        </svg>
      </PlainButton>
      <PlainButton aria-label="Todoist">
        <svg width="16" height="16" viewBox="0 0 16 16">
          <rect width="16" height="16" rx="2" fill="#4c4c4c" />
          <path d="m0 5 3 1.500 8-4M0 8.500 3 10l8-4M0 12l3 1.500 8-4" fill="none" stroke="#f3f2f1" strokeWidth="1.200" />
        </svg>
      </PlainButton>
      <PlainButton aria-label="YouTube"><YouTubeMark>You<span>Tube</span></YouTubeMark></PlainButton>
      <PlainButton aria-label="Messages">
        <svg width="16" height="16" viewBox="0 0 16 16">
          <circle cx="8" cy="7.500" r="7" fill="#27ae3f" />
          <path d="m9 13 5.500 3-1-6z" fill="#27ae3f" />
          <circle cx="4.500" cy="7.500" r="1.100" fill="#fff" />
          <circle cx="8" cy="7.500" r="1.100" fill="#fff" />
          <circle cx="11.500" cy="7.500" r="1.100" fill="#fff" />
        </svg>
      </PlainButton>
      <MenuGroup>
        <Divider $height={34} />
        <PlainButton aria-label="Menu">
          <svg width="16" height="14" viewBox="0 0 16 14"><path d="M0 2h16M0 7h16M0 12h16" stroke="currentColor" strokeWidth="2.400" /></svg>
        </PlainButton>
      </MenuGroup>
    </ToolIcons>
  </NavBar>
);

const Bookmarks = () => (
  <BookmarkBar>
    {bookmarks.map((b) => (
      <Bookmark key={b.title} href="#" $width={b.width}>
        {b.icon}
        {b.title}
        {b.menu && (
          <svg width="9" height="6" viewBox="0 0 9 6"><path d="m1 1 3.500 3.500L8 1" fill="none" stroke="#3d3d3d" strokeWidth="1.700" /></svg>
        )}
      </Bookmark>
    ))}
  </BookmarkBar>
);

const SelectField = ({ id, label, value, help }: { id: string; label: string; value: string; help?: boolean }) => (
  <Row>
    <Label htmlFor={id}>{label}</Label>
    <SelectShell>
      <Select id={id} defaultValue={value}>
        <option>{value}</option>
      </Select>
      <SelectArrow width="9" height="28" viewBox="0 0 9 28">
        <path d="M0 0h9v28H0z" fill="#eee" />
        <path d="M8 1v26H1" fill="none" stroke="#777" strokeWidth="2" />
        <path d="M1 12h6L4 16z" fill="#000" />
      </SelectArrow>
    </SelectShell>
    {help && <Help><HelpIcon /></Help>}
  </Row>
);

const InputField = ({ id, label, value }: { id: string; label: string; value: string }) => (
  <Row>
    <Label $low htmlFor={id}>{label}</Label>
    <TextField id={id} defaultValue={value} />
  </Row>
);

const JournalPage = () => (
  <>
    <SiteHeader>
      <Brand href="#">
        <BrandEmblem>
          <UgcEmblem />
          ज्ञान-विज्ञान विमुक्तये
        </BrandEmblem>
        <BrandText>
          <BrandHindi>विश्वविद्यालय अनुदान आयोग</BrandHindi>
          <BrandName>University Grants Commission</BrandName>
          <BrandMotto>quality higher education for all</BrandMotto>
        </BrandText>
      </Brand>
      <SiteNav>
        {["Home", "About Us", "Organization", "Commission", "Universities", "Colleges", "Publications"].map((n) => (
          <a key={n} href="#">{n}</a>
        ))}
      </SiteNav>
      <StateEmblem>
        <LionCapital />
        सत्यमेव जयते
      </StateEmblem>
    </SiteHeader>
    <PageTitle>Please fill in the following checklist for consideration of new Journals in the UGC Journal database</PageTitle>
    <Columns>
      <FormColumn>
        <Legend>General Information</Legend>
        <InputField id="name" label="Name of the Journal :" value="Journal of Applied" />
        <InputField id="issn" label="ISSN Number (if available):" value="23955554" />
        <InputField id="eissn" label="e-ISSN Number (if available):" value="23945554" />
        <InputField id="publisher" label="Publisher:" value="" />
        <SelectField id="nature" label="Nature of Journal:" value="Select" />
        <SelectField id="period" label="Periodicity:" value="Select" />
        <SelectField id="language" label="Language of Journal:" value="English" help />
        <Row $tall>
          <Label htmlFor="subjects">Subjects:</Label>
          <TextField id="subjects" $tall placeholder="Choose a Subject" />
          <Help><HelpIcon /><a href="#">View All Subjects</a></Help>
        </Row>
        <Row>
          <Label htmlFor="city">Place of Publication (City):</Label>
          <TextField id="city" $width={164} />
        </Row>
      </FormColumn>
      <SideColumn>
        <Greeting>Welcome Don Bosco University || <a href="#">Logout</a></Greeting>
        <ListLink href="#">View UGC Journals List</ListLink>
      </SideColumn>
    </Columns>
  </>
);

const Alert = () => (
  <Backdrop>
    <Dialog role="dialog" aria-labelledby="alert-title">
      <DialogTitle id="alert-title">Alert</DialogTitle>
      <DialogBody>
        <p>
          <strong>
            The Journal Title: (Journal of Applied and{"\u00a0"}Fundamental Sciences) is already exists with ISSN:
            (23955554) in UGC Approved List/Recommendation by Universities/UGC.
          </strong>
        </p>
        <p>
          If the information on UGC list is correct click "Yes" to add new title. Click on "No" to update the record and
          recommend with updated information.
        </p>
      </DialogBody>
      <DialogFooter>
        <DialogButton>No</DialogButton>
        <DialogButton>Yes</DialogButton>
      </DialogFooter>
    </Dialog>
  </Backdrop>
);

export default function App() {
  return (
    <Desktop>
      <GlobalStyle />
      <TopPanel />
      <Workspace>
        <Launcher>
          {tiles.map((t) => (
            <Tile key={t.name} aria-label={t.name} $tint={t.tint} $running={t.running} $focused={t.focused}>
              {t.art}
            </Tile>
          ))}
          <StackedTiles />
        </Launcher>
        <Browser>
          <Tabs />
          <Navigation />
          <Bookmarks />
          <Viewport>
            <PageArea>
              <JournalPage />
              <Alert />
            </PageArea>
            <ScrollTrack><ScrollThumb /></ScrollTrack>
          </Viewport>
        </Browser>
      </Workspace>
    </Desktop>
  );
}
